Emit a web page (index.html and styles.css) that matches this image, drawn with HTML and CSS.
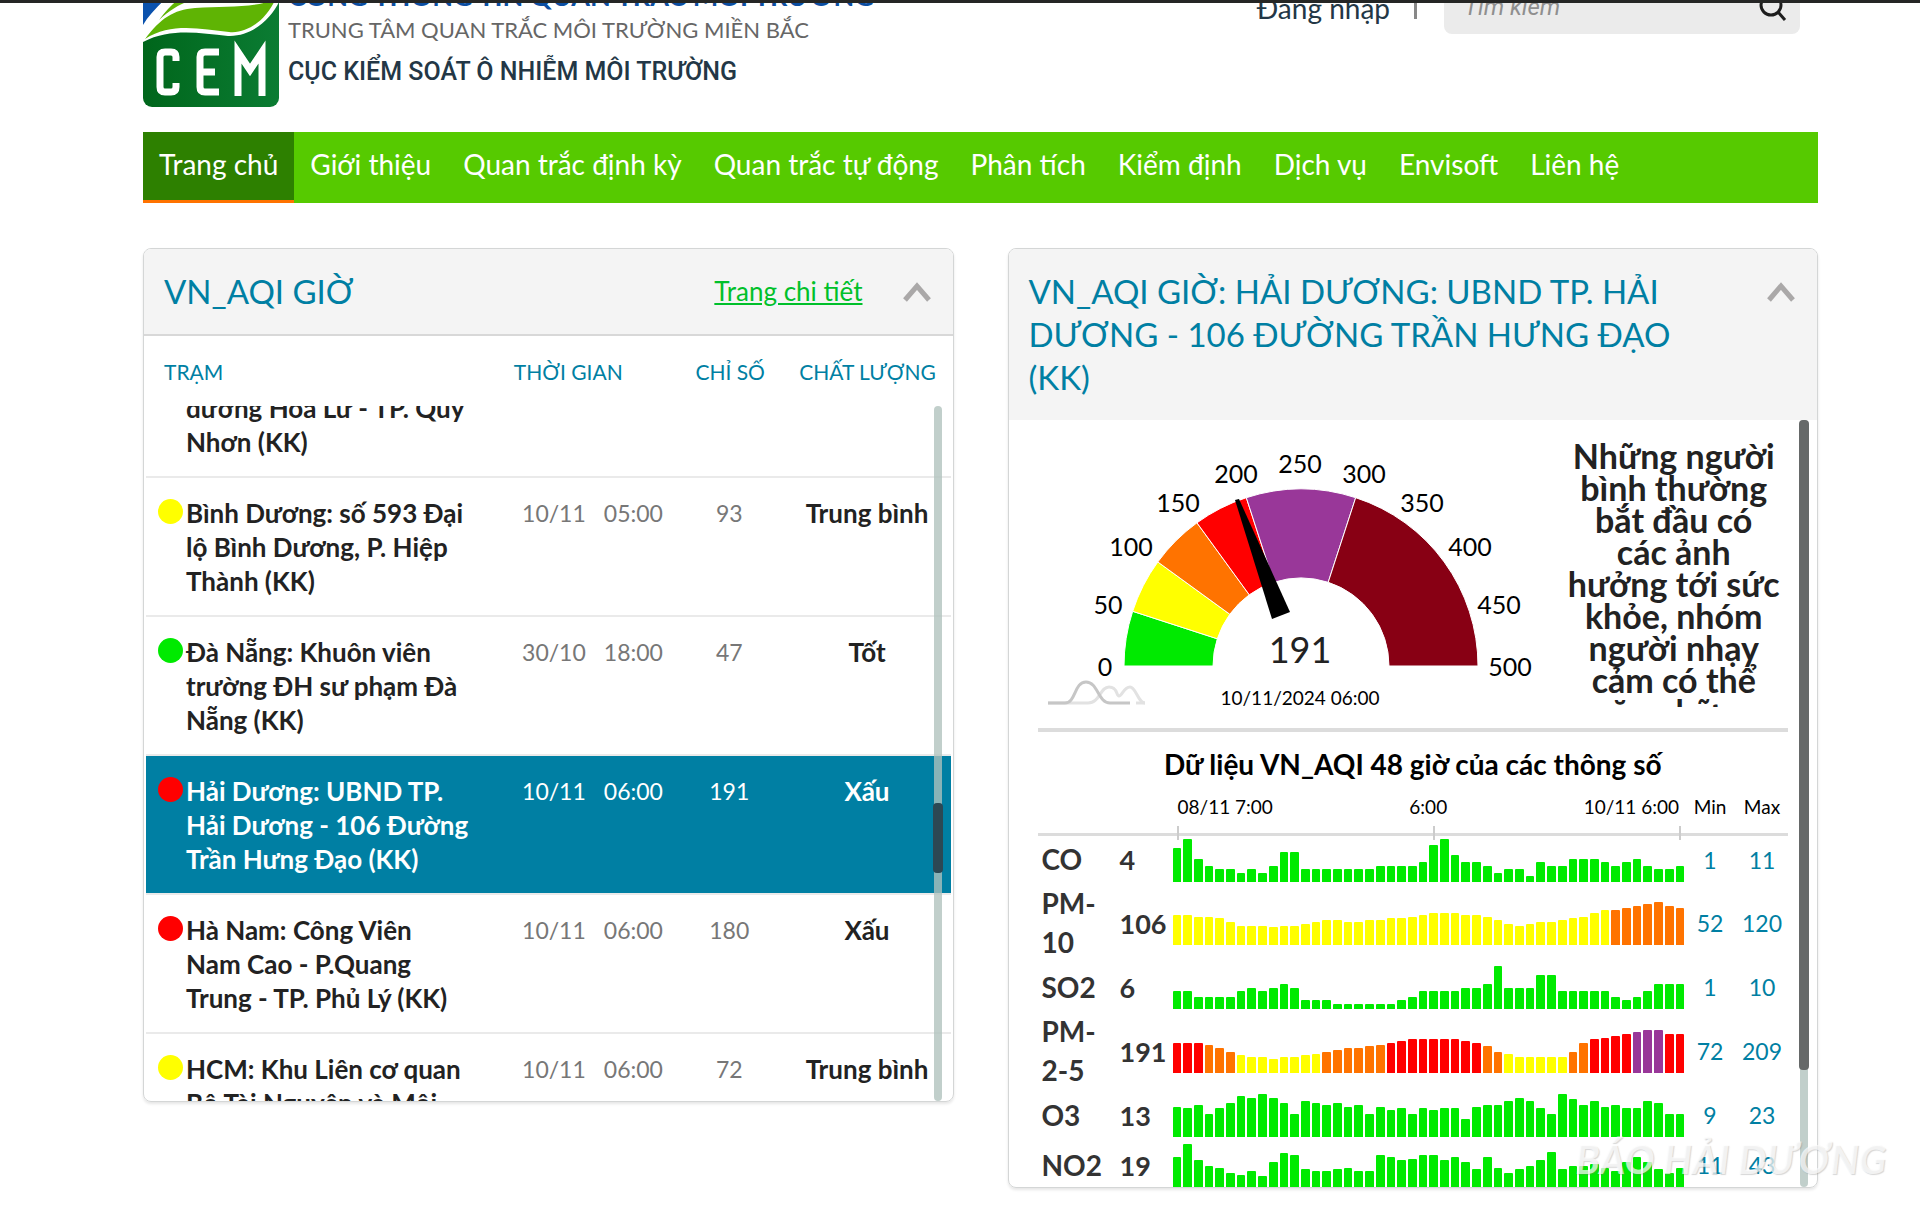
FILE: index.html
```
<!DOCTYPE html>
<html lang="vi">
<head>
<meta charset="utf-8">
<title>Cổng thông tin quan trắc môi trường</title>
<link rel="stylesheet" href="styles.css">
</head>
<body>
<div class="topbar"></div>
<div class="page">
  <header class="header">
    <a class="logo" href="#" aria-label="CEM">
      <svg viewBox="0 0 136 137" width="136" height="137" aria-hidden="true">
        <defs>
          <linearGradient id="ground" x1="0" y1="0" x2="1" y2="0"><stop offset="0" stop-color="#00661b"/><stop offset="1" stop-color="#0b7c33"/></linearGradient>
          <clipPath id="round"><rect width="136" height="137" rx="9"/></clipPath>
        </defs>
        <g clip-path="url(#round)">
          <rect width="136" height="137" fill="url(#ground)"/>
          <path d="M0 0H136V32C128 48 110 67 85 66C55 63 28 58 0 72Z" fill="#fff"/>
          <path d="M0 0H55C30 22 10 38 0 55Z" fill="#0b52ad"/>
          <path d="M2 69C18 48 30 40 52 38C82 36 108 38 132 30C124 48 106 64 86 62C58 59 28 52 2 69Z" fill="#5fb404"/>
          <path d="M16 50C25 38 34 28 46 24H66C44 30 30 37 16 50Z" fill="#5fb404"/>
          <g fill="none" stroke="#fff" stroke-width="7">
            <path d="M33 91V87Q33 82 28 82H22Q17 82 17 87V117Q17 122 22 122H28Q33 122 33 117V113"/>
            <path d="M76 82H62Q57 82 57 87V117Q57 122 62 122H76M57 102H72"/>
            <path d="M95 126V82L107 100L119 82V126"/>
          </g>
        </g>
      </svg>
    </a>
    <div class="titles">
      <div class="site-name">CỔNG THÔNG TIN QUAN TRẮC MÔI TRƯỜNG</div>
      <div class="centre-name">TRUNG TÂM QUAN TRẮC MÔI TRƯỜNG MIỀN BẮC</div>
      <div class="agency-name">CỤC KIỂM SOÁT Ô NHIỄM MÔI TRƯỜNG</div>
    </div>
    <div class="actions">
      <a class="login" href="#">Đăng nhập</a>
      <span class="divider"></span>
      <form class="search">
        <input type="text" placeholder="Tìm kiếm" aria-label="Tìm kiếm">
        <button type="button" aria-label="Tìm">
          <svg viewBox="0 0 28 28" width="28" height="28" fill="none" stroke="#1d1d1d" stroke-width="3"><circle cx="12" cy="12" r="10"/><path d="M19 19L26 27"/></svg>
        </button>
      </form>
    </div>
  </header>

  <nav class="nav">
    <a class="active" href="#">Trang chủ</a>
    <a href="#">Giới thiệu</a>
    <a href="#">Quan trắc định kỳ</a>
    <a href="#">Quan trắc tự động</a>
    <a href="#">Phân tích</a>
    <a href="#">Kiểm định</a>
    <a href="#">Dịch vụ</a>
    <a href="#">Envisoft</a>
    <a href="#">Liên hệ</a>
  </nav>

  <main class="panels">
    <section class="panel">
      <div class="panel-head ruled">
        <h2>VN_AQI GIỜ</h2>
        <a class="detail" href="#">Trang chi tiết</a>
        <button class="fold" type="button" aria-label="Thu gọn"><svg viewBox="0 0 28 20" width="28" height="20" fill="none" stroke="#aaa8a8" stroke-width="5"><path d="M2 18L14 4L26 18"/></svg></button>
      </div>
      <table class="stations stations-head">
        <colgroup><col class="c-name"><col class="c-time"><col class="c-index"><col class="c-level"></colgroup>
        <thead><tr><th class="th-name">TRẠM</th><th class="th-time">THỜI GIAN</th><th>CHỈ SỐ</th><th class="th-level">CHẤT LƯỢNG</th></tr></thead>
      </table>
      <div class="scroll station-scroll">
        <table class="stations stations-body">
          <colgroup><col class="c-name"><col class="c-time"><col class="c-index"><col class="c-level"></colgroup>
          <tbody>
            <tr><td><div class="station"><span class="dot none"></span><span>đường Hoa Lư - TP. Quy<br>Nhơn (KK)</span></div></td><td></td><td></td><td></td></tr>
            <tr><td><div class="station"><span class="dot moderate"></span><span>Bình Dương: số 593 Đại<br>lộ Bình Dương, P. Hiệp<br>Thành (KK)</span></div></td><td><div class="time"><span>10/11</span><span>05:00</span></div></td><td>93</td><td class="level">Trung bình</td></tr>
            <tr><td><div class="station"><span class="dot good"></span><span>Đà Nẵng: Khuôn viên<br>trường ĐH sư phạm Đà<br>Nẵng (KK)</span></div></td><td><div class="time"><span>30/10</span><span>18:00</span></div></td><td>47</td><td class="level">Tốt</td></tr>
            <tr class="selected"><td><div class="station"><span class="dot bad"></span><span>Hải Dương: UBND TP.<br>Hải Dương - 106 Đường<br>Trần Hưng Đạo (KK)</span></div></td><td><div class="time"><span>10/11</span><span>06:00</span></div></td><td>191</td><td class="level">Xấu</td></tr>
            <tr><td><div class="station"><span class="dot bad"></span><span>Hà Nam: Công Viên<br>Nam Cao - P.Quang<br>Trung - TP. Phủ Lý (KK)</span></div></td><td><div class="time"><span>10/11</span><span>06:00</span></div></td><td>180</td><td class="level">Xấu</td></tr>
            <tr><td><div class="station"><span class="dot moderate"></span><span>HCM: Khu Liên cơ quan<br>Bộ Tài Nguyên và Môi</span></div></td><td><div class="time"><span>10/11</span><span>06:00</span></div></td><td>72</td><td class="level">Trung bình</td></tr>
          </tbody>
        </table>
        <div class="rail"><div class="thumb"></div></div>
      </div>
    </section>

    <section class="panel">
      <div class="panel-head">
        <h2>VN_AQI GIỜ: HẢI DƯƠNG: UBND TP. HẢI<br>DƯƠNG - 106 ĐƯỜNG TRẦN HƯNG ĐẠO<br>(KK)</h2>
        <button class="fold" type="button" aria-label="Thu gọn"><svg viewBox="0 0 28 20" width="28" height="20" fill="none" stroke="#aaa8a8" stroke-width="5"><path d="M2 18L14 4L26 18"/></svg></button>
      </div>
      <div class="scroll detail-scroll">
        <div class="overview">
          <svg class="gauge" viewBox="0 0 522 288" width="522" height="288" role="img" aria-label="VN_AQI 191">
            <g id="bands" stroke="#fff" stroke-width="1"></g>
            <path d="M197 80L201 79L252 192L234 199Z" fill="#000"/>
            <g id="scale" class="scale"></g>
            <text class="reading" x="262" y="243">191</text>
            <text class="stamp" x="262" y="285">10/11/2024 06:00</text>
            <g fill="none" stroke-width="3">
              <path d="M10 283H50C62 283 62 267 71 267S78 276 81 276S86 267 92 267S100 283 107 283" stroke="#e2e2e2"/>
              <path d="M98 283H107" stroke="#e2e2e2"/>
              <path d="M10 283H27C38 283 36 262 48 262S60 283 72 283H92" stroke="#c6c6c6"/>
            </g>
          </svg>
          <p class="advice">Những người<br>bình thường<br>bắt đầu có<br>các ảnh<br>hưởng tới sức<br>khỏe, nhóm<br>người nhạy<br>cảm có thể<br>gặp những</p>
        </div>
        <h3>Dữ liệu VN_AQI 48 giờ của các thông số</h3>
        <table class="params">
          <colgroup><col class="p-name"><col class="p-now"><col><col class="p-min"><col class="p-max"></colgroup>
          <thead>
            <tr><th></th><th></th><th><div class="axis"><span>08/11 7:00</span><span>6:00</span><span>10/11 6:00</span></div></th><th>Min</th><th>Max</th></tr>
          </thead>
          <tbody>
            <tr><th scope="row">CO</th><td class="now">4</td><td><div class="bars" data-series="co"></div></td><td>1</td><td>11</td></tr>
            <tr><th scope="row">PM-<br>10</th><td class="now">106</td><td><div class="bars" data-series="pm10"></div></td><td>52</td><td>120</td></tr>
            <tr><th scope="row">SO2</th><td class="now">6</td><td><div class="bars" data-series="so2"></div></td><td>1</td><td>10</td></tr>
            <tr><th scope="row">PM-<br>2-5</th><td class="now">191</td><td><div class="bars" data-series="pm25"></div></td><td>72</td><td>209</td></tr>
            <tr><th scope="row">O3</th><td class="now">13</td><td><div class="bars" data-series="o3"></div></td><td>9</td><td>23</td></tr>
            <tr><th scope="row">NO2</th><td class="now">19</td><td><div class="bars" data-series="no2"></div></td><td>11</td><td>43</td></tr>
          </tbody>
        </table>
        <div class="rail wide"><div class="thumb"></div></div>
      </div>
    </section>
  </main>
  <div class="watermark">BÁO HẢI DƯƠNG</div>
</div>
<script src="script.js"></script>
</body>
</html>
```
FILE: styles.css
```
* { box-sizing: border-box; }
body {
  margin: 0;
  background: #fff;
  color: #222;
  font-family: Lato, "Open Sans", sans-serif;
  overflow: hidden;
}
a { color: inherit; text-decoration: none; }
button { border: 0; padding: 0; background: none; }
h2, h3, p { margin: 0; }
table { border-collapse: collapse; width: 100%; table-layout: fixed; }
th, td { padding: 0; }

.topbar {
  position: absolute;
  inset: 0 0 auto 0;
  height: 3px;
  background: #252625;
  z-index: 2;
}
.page { position: relative; padding: 0 102px 20px 143px; }

/* The page is scrolled a little, so the header starts above the window. */
.header { display: flex; margin-top: -30px; height: 162px; }
.logo svg { display: block; }
.titles { padding: 10px 0 0 9px; white-space: nowrap; }
.site-name { font-size: 27px; line-height: 32px; font-weight: 700; color: #0b4ea2; }
.centre-name { font-size: 22px; line-height: 36px; color: #666; }
.agency-name { font: 500 25px/40px Roboto, sans-serif; color: #233746; margin-top: 4px; }
.actions { display: flex; align-items: center; height: 54px; margin: 10px 18px 0 auto; }
.login { font-size: 28px; padding-top: 2px; color: #233746; }
.divider { width: 3px; height: 24px; margin: 0 27px 0 24px; background: #888; }
.search {
  display: flex;
  align-items: center;
  width: 356px;
  height: 54px;
  padding: 0 13px 0 20px;
  border-radius: 8px;
  background: #ebebeb;
}
.search input {
  flex: 1;
  min-width: 0;
  border: 0;
  padding: 0;
  background: none;
  font: italic 24px/32px Roboto, sans-serif;
}
.search input::placeholder { color: #8f8f8f; }
.search svg { display: block; }

.nav { display: flex; background: #56ca00; color: #fff; font-size: 28px; line-height: 64px; white-space: nowrap; }
.nav a { padding: 0 16px 4px; border-bottom: 3px solid transparent; }
.nav .active { background: #2d8000; border-color: #ff7200; }

.panels { display: grid; grid-template-columns: 1fr 1fr; gap: 54px; align-items: start; margin-top: 45px; }
.panel {
  border: 1px solid #d4d6d6;
  border-radius: 8px;
  box-shadow: 0 2px 3px rgba(0, 0, 0, .1);
  overflow: hidden;
}
.panel-head { display: flex; align-items: flex-start; padding: 21px 22px 21px 20px; background: #f4f4f4; }
.ruled { border-bottom: 2px solid #d8d8d8; }
h2 { flex: 1; font-size: 33px; line-height: 43px; font-weight: 400; color: #007fa3; white-space: nowrap; }
.detail { font-size: 26px; line-height: 43px; color: #00c02a; text-decoration: underline; margin-right: 40px; }
.fold { height: 43px; }
.fold svg { display: block; }

.stations { width: auto; min-width: 100%; }
.c-name { width: 44%; }
.c-time { width: 23%; }
.c-index { width: 11%; }
.c-level { width: 22%; }
.stations-head th { height: 70px; font-size: 21px; font-weight: 400; color: #007fa3; }
.stations-head .th-name { padding-left: 20px; text-align: left; }
.stations-head .th-time { padding-left: 14px; text-align: left; }
.stations-head .th-level { padding-left: 8px; }
.scroll { position: relative; overflow: hidden; }
.station-scroll { height: 695px; padding: 0 2px; }
.stations-body { margin-top: -33px; }
.stations-body tr { border-bottom: 2px solid #eaeaea; }
.stations-body td { padding: 18px 0 17px; font-size: 23px; line-height: 34px; color: #777; text-align: center; vertical-align: top; white-space: nowrap; }
.station { display: flex; gap: 3px; padding-left: 12px; font-size: 26px; font-weight: 700; color: #222; text-align: left; }
.time { display: flex; justify-content: center; gap: 18px; }
.stations-body .level { font-size: 26px; font-weight: 700; color: #222; padding-left: 10px; }
.stations-body .selected td, .selected .station { background: #007fa3; color: #fff; }
.dot { flex: none; width: 25px; height: 25px; margin-top: 3px; border-radius: 50%; }
.none { background: none; }
.good { background: #00ea00; }
.moderate { background: #ff0; }
.bad { background: #f00; }

.rail { position: absolute; top: 0; bottom: 0; right: 11px; width: 8px; border-radius: 4px; background: rgba(176, 193, 189, .78); }
.rail .thumb { position: absolute; top: 397px; left: -1px; right: -1px; height: 70px; border-radius: 4px; background: #2c4854; }
.wide { right: 9px; }
.wide .thumb { top: 0; height: 650px; background: #666969; }

.detail-scroll { height: 767px; padding: 0 29px; }
.overview { display: flex; height: 312px; border-bottom: 4px solid #dcdcdc; }
.gauge { display: block; flex: none; }
.scale text { font-size: 25px; text-anchor: middle; fill: #000; }
.reading { font-size: 36px; text-anchor: middle; fill: #222; }
.stamp { font-size: 19px; text-anchor: middle; fill: #000; }
.advice { flex: 1; margin-top: 20px; height: 267px; overflow: hidden; font-size: 34px; line-height: 32px; font-weight: 700; text-align: center; white-space: nowrap; }
h3 { padding-top: 15px; font-size: 28px; line-height: 34px; font-weight: 700; color: #000; text-align: center; }

.p-name { width: 82px; }
.p-now { width: 53px; }
.p-min { width: 52px; }
.p-max { width: 52px; }
.params thead th { height: 53px; padding-bottom: 1px; border-bottom: 3px solid #dcdcdc; font-size: 19px; font-weight: 400; color: #000; }
.axis { position: relative; display: flex; justify-content: space-between; padding: 0 5px; }
.axis::before, .axis::after, .axis span:nth-child(2)::after { content: ""; position: absolute; top: 31px; width: 2px; height: 14px; background: #ccc; }
.axis::before { left: 4px; }
.axis::after { right: 3px; }
.axis span:nth-child(2)::after { left: 51%; }
.params tbody th, .now { text-align: left; font-size: 28px; line-height: 39px; font-weight: 700; color: #333; white-space: nowrap; }
.params tbody th { padding-left: 4px; }
.params tbody tr { height: 50px; }
.params tbody td { font-size: 23px; color: #007fa3; text-align: center; }
.params tbody .now { font-size: 27px; color: #333; text-align: left; }
.bars { display: flex; align-items: flex-end; gap: 2px; height: 44px; }
.bars i { flex: 1; border-radius: 1px 1px 0 0; background: #00ea00; }
.bars .y { background: #ff0; }
.bars .o { background: #ff7300; }
.bars .r { background: #f00; }
.bars .p { background: #993799; }

.watermark {
  position: absolute;
  right: 34px;
  bottom: 24px;
  font-size: 40px;
  line-height: 50px;
  font-weight: 700;
  font-style: italic;
  color: rgba(255, 255, 255, .7);
  text-shadow: 1px 1px 1px rgba(120, 120, 120, .3);
}
```
FILE: script.js
```
const series = {
  co: [[34,43,23,16,13,13,9,13,9,16,30,30,13,13,13,13,13,13,13,16,16,16,16,20,37,43,27,20,20,16,9,13,13,6,20,16,16,23,23,23,20,16,20,23,16,13,13,16], "g48"],
  pm10: [[30,30,28,28,27,23,19,19,19,18,19,19,21,23,25,25,23,23,25,25,27,27,28,30,32,32,32,30,30,28,25,21,19,21,23,23,25,27,28,32,35,35,37,39,41,43,39,37], "y41 o7"],
  so2: [[18,18,12,12,12,12,18,21,18,21,25,21,9,9,9,5,5,5,5,5,5,9,12,18,18,18,18,21,21,25,43,21,21,21,34,34,18,18,18,18,18,12,9,12,18,25,25,25], "g48"],
  pm25: [[30,30,30,28,25,21,18,16,16,14,16,16,18,19,21,23,25,25,27,28,30,32,34,34,34,34,34,32,30,27,21,19,16,16,16,16,16,21,30,34,35,37,39,41,43,43,39,39], "r3 o3 y8 o6 r9 o2 y6 o2 r4 p3 r2"],
  o3: [[30,29,32,23,29,34,41,39,43,39,34,23,36,34,32,34,30,32,23,30,27,29,23,29,27,29,29,18,30,32,32,36,39,36,29,23,43,38,32,36,30,32,29,29,36,34,23,23], "g48"],
  no2: [[30,43,27,21,19,14,12,16,11,25,34,32,18,16,16,18,19,16,16,32,30,27,28,32,32,27,30,25,18,30,19,14,18,21,27,35,18,21,21,23,19,16,25,30,25,18,14,19], "g48"]
};
for (const box of document.querySelectorAll(".bars")) {
  const [heights, runs] = series[box.dataset.series];
  const levels = runs.split(" ").flatMap(run => Array(+run.slice(1)).fill(run[0]));
  heights.forEach((height, i) => {
    const bar = document.createElement("i");
    bar.className = levels[i];
    bar.style.height = height + "px";
    box.append(bar);
  });
}

// Gauge: 0 to 500 over a half circle
const cx = 263, cy = 246, outer = 177, inner = 88;
const svg = (name, attrs, parent) => {
  const node = document.createElementNS("http://www.w3.org/2000/svg", name);
  for (const key in attrs) node.setAttribute(key, attrs[key]);
  parent.append(node);
  return node;
};
const point = (value, radius) => {
  const angle = Math.PI * (1 - value / 500);
  return (cx + radius * Math.cos(angle)) + " " + (cy - radius * Math.sin(angle));
};
const bands = [[0, 50, "#00ea00"], [50, 100, "#ffff00"], [100, 150, "#ff7300"], [150, 200, "#ff0000"], [200, 300, "#993799"], [300, 500, "#880014"]];
for (const [from, to, fill] of bands) {
  svg("path", { fill, d: `M${point(from, outer)}A${outer} ${outer} 0 0 1 ${point(to, outer)}L${point(to, inner)}A${inner} ${inner} 0 0 0 ${point(from, inner)}Z` }, document.getElementById("bands"));
}
const marks = [[67, 247], [70, 185], [93, 127], [140, 83], [198, 54], [262, 44], [326, 54], [384, 83], [432, 127], [461, 185], [472, 247]];
marks.forEach(([x, y], i) => {
  svg("text", { x, y: y + 9 }, document.getElementById("scale")).textContent = i * 50;
});
```
